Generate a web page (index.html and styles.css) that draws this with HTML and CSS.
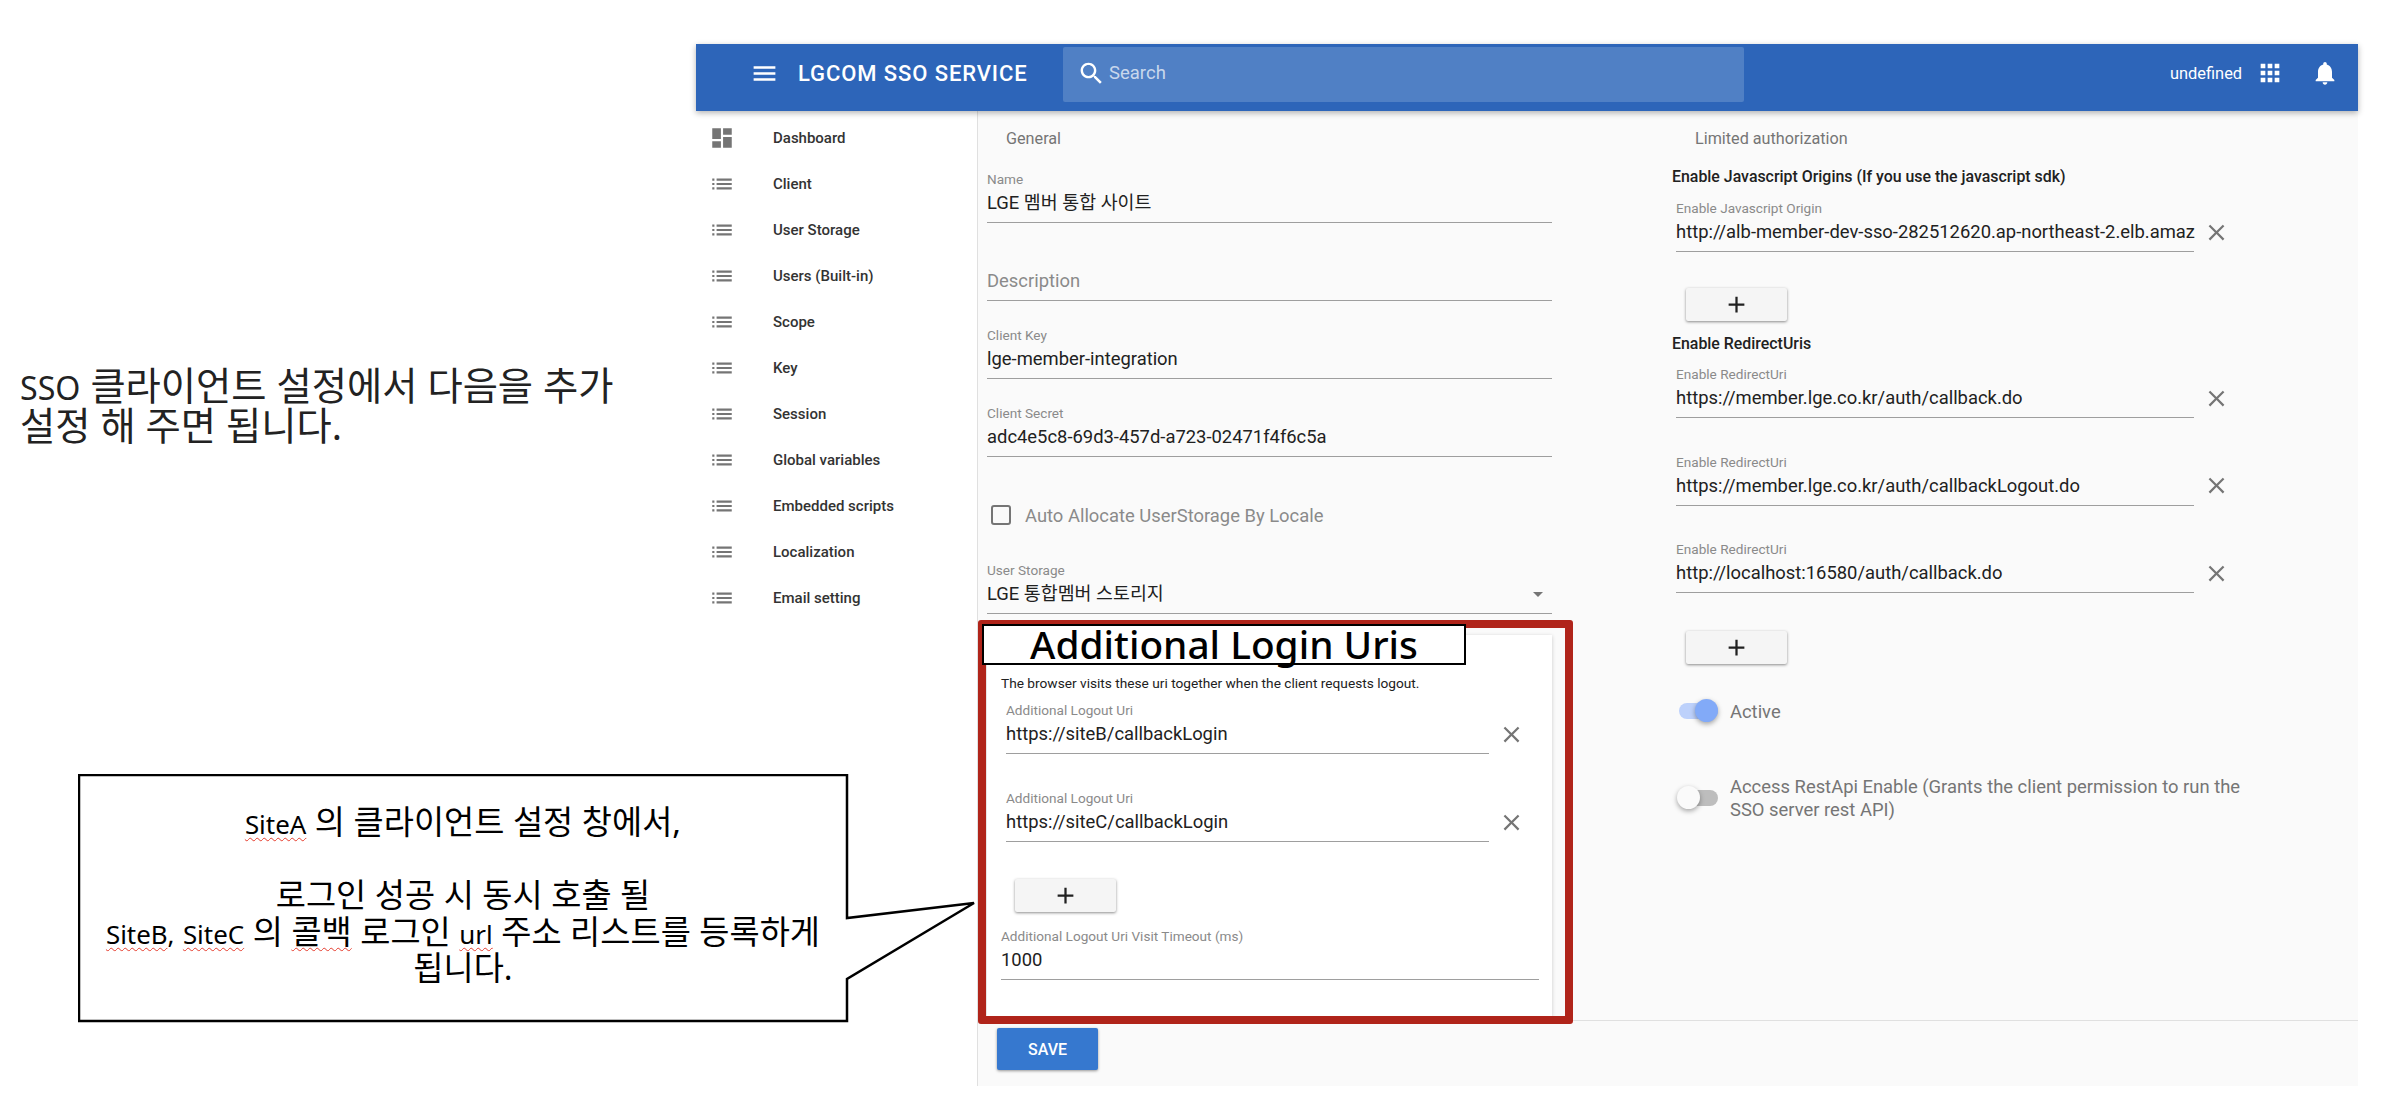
FILE: index.html
```html
<!DOCTYPE html>
<html lang="ko">
<head>
<meta charset="UTF-8">
<title>LGCOM SSO SERVICE</title>
<link rel="stylesheet" href="styles.css">
</head>
<body>
<svg class="defs" width="0" height="0">
	<symbol id="i-menu" viewBox="0 0 24 24"><path d="M3 18h18v-2H3v2zm0-5h18v-2H3v2zm0-7v2h18V6H3z"/></symbol>
	<symbol id="i-search" viewBox="0 0 24 24"><path d="M15.5 14h-.79l-.28-.27C15.41 12.59 16 11.11 16 9.5 16 5.91 13.09 3 9.500 3S3 5.910 3 9.500 5.910 16 9.500 16c1.610 0 3.090-.59 4.230-1.570l.27.28v.79l5 4.990L20.490 19l-4.990-5zm-6 0C7.010 14 5 11.990 5 9.500S7.010 5 9.500 5 14 7.010 14 9.500 11.990 14 9.500 14z"/></symbol>
	<symbol id="i-dash" viewBox="0 0 24 24"><path d="M3 13h8V3H3v10zm0 8h8v-6H3v6zm10 0h8V11h-8v10zm0-18v6h8V3h-8z"/></symbol>
	<symbol id="i-list" viewBox="0 0 24 24"><path d="M3 13h2v-2H3v2zm0 4h2v-2H3v2zm0-8h2V7H3v2zm4 4h14v-2H7v2zm0 4h14v-2H7v2zM7 7v2h14V7H7z"/></symbol>
	<symbol id="i-apps" viewBox="0 0 24 24"><path d="M4 8h4V4H4v4zm6 12h4v-4h-4v4zm-6 0h4v-4H4v4zm0-6h4v-4H4v4zm6 0h4v-4h-4v4zm6-10v4h4V4h-4zm-6 4h4V4h-4v4zm6 6h4v-4h-4v4zm0 6h4v-4h-4v4z"/></symbol>
	<symbol id="i-bell" viewBox="0 0 24 24"><path d="M12 22c1.100 0 2-.9 2-2h-4c0 1.100.89 2 2 2zm6-6v-5c0-3.070-1.640-5.640-4.500-6.320V4c0-.83-.67-1.500-1.500-1.500s-1.500.67-1.500 1.500v.68C7.630 5.360 6 7.920 6 11v5l-2 2v1h16v-1l-2-2z"/></symbol>
	<symbol id="i-clear" viewBox="0 0 24 24"><path d="M19 6.410L17.590 5 12 10.590 6.410 5 5 6.410 10.590 12 5 17.590 6.410 19 12 13.410 17.590 19 19 17.590 13.410 12z"/></symbol>
	<symbol id="i-add" viewBox="0 0 24 24"><path d="M19 13h-6v6h-2v-6H5v-2h6V5h2v6h6v2z"/></symbol>
</svg>

<div class="app">
	<header class="topbar">
		<svg class="ic-menu"><use href="#i-menu"/></svg>
		<div class="brand">LGCOM SSO SERVICE</div>
		<div class="search">
			<svg class="ic-search"><use href="#i-search"/></svg>
			<span>Search</span>
		</div>
		<div class="user">undefined</div>
		<svg class="ic-apps"><use href="#i-apps"/></svg>
		<svg class="ic-bell"><use href="#i-bell"/></svg>
	</header>
	<div class="body">
		<nav class="sidebar">
			<a class="nav-item"><svg><use href="#i-dash"/></svg>Dashboard</a>
			<a class="nav-item"><svg><use href="#i-list"/></svg>Client</a>
			<a class="nav-item"><svg><use href="#i-list"/></svg>User Storage</a>
			<a class="nav-item"><svg><use href="#i-list"/></svg>Users (Built-in)</a>
			<a class="nav-item"><svg><use href="#i-list"/></svg>Scope</a>
			<a class="nav-item"><svg><use href="#i-list"/></svg>Key</a>
			<a class="nav-item"><svg><use href="#i-list"/></svg>Session</a>
			<a class="nav-item"><svg><use href="#i-list"/></svg>Global variables</a>
			<a class="nav-item"><svg><use href="#i-list"/></svg>Embedded scripts</a>
			<a class="nav-item"><svg><use href="#i-list"/></svg>Localization</a>
			<a class="nav-item"><svg><use href="#i-list"/></svg>Email setting</a>
		</nav>
		<main class="main">
			<div class="content">
				<section class="col-left">
					<h2 class="group general">General</h2>
					<div class="field first">
						<label>Name</label>
						<div class="value">LGE 멤버 통합 사이트</div>
					</div>
					<div class="field gap">
						<label></label>
						<div class="value hint">Description</div>
					</div>
					<div class="field gap">
						<label>Client Key</label>
						<div class="value">lge-member-integration</div>
					</div>
					<div class="field gap">
						<label>Client Secret</label>
						<div class="value">adc4e5c8-69d3-457d-a723-02471f4f6c5a</div>
					</div>
					<div class="check-row">
						<span class="checkbox"></span>
						<span>Auto Allocate UserStorage By Locale</span>
					</div>
					<div class="field select">
						<label>User Storage</label>
						<div class="value">LGE 통합멤버 스토리지<span class="arrow"></span></div>
					</div>
					<div class="card">
						<p class="card-desc">The browser visits these uri together when the client requests logout.</p>
						<div class="uri-row first-uri">
							<div class="field">
								<label>Additional Logout Uri</label>
								<div class="value">https://siteB/callbackLogin</div>
							</div>
							<svg class="ic-clear"><use href="#i-clear"/></svg>
						</div>
						<div class="uri-row">
							<div class="field">
								<label>Additional Logout Uri</label>
								<div class="value">https://siteC/callbackLogin</div>
							</div>
							<svg class="ic-clear"><use href="#i-clear"/></svg>
						</div>
						<button class="add-btn card-add"><svg><use href="#i-add"/></svg></button>
						<div class="field timeout">
							<label>Additional Logout Uri Visit Timeout (ms)</label>
							<div class="value">1000</div>
						</div>
					</div>
				</section>
				<section class="col-right">
					<h2 class="group limited">Limited authorization</h2>
					<h3 class="sub js-origins">Enable Javascript Origins (If you use the javascript sdk)</h3>
					<div class="uri-row origin">
						<div class="field">
							<label>Enable Javascript Origin</label>
							<div class="value">http://alb-member-dev-sso-282512620.ap-northeast-2.elb.amaz</div>
						</div>
						<svg class="ic-clear"><use href="#i-clear"/></svg>
					</div>
					<button class="add-btn"><svg><use href="#i-add"/></svg></button>
					<h3 class="sub redirects">Enable RedirectUris</h3>
					<div class="uri-row redirect-first">
						<div class="field">
							<label>Enable RedirectUri</label>
							<div class="value">https://member.lge.co.kr/auth/callback.do</div>
						</div>
						<svg class="ic-clear"><use href="#i-clear"/></svg>
					</div>
					<div class="uri-row">
						<div class="field">
							<label>Enable RedirectUri</label>
							<div class="value">https://member.lge.co.kr/auth/callbackLogout.do</div>
						</div>
						<svg class="ic-clear"><use href="#i-clear"/></svg>
					</div>
					<div class="uri-row">
						<div class="field">
							<label>Enable RedirectUri</label>
							<div class="value">http://localhost:16580/auth/callback.do</div>
						</div>
						<svg class="ic-clear"><use href="#i-clear"/></svg>
					</div>
					<button class="add-btn add-last"><svg><use href="#i-add"/></svg></button>
					<div class="toggle-row active-row">
						<span class="toggle on"><i></i></span>
						<span>Active</span>
					</div>
					<div class="toggle-row rest-row">
						<span class="toggle"><i></i></span>
						<span>Access RestApi Enable (Grants the client permission to run the SSO server rest API)</span>
					</div>
				</section>
			</div>
			<footer class="footer">
				<button class="save">SAVE</button>
			</footer>
		</main>
	</div>
</div>

<p class="note"><span class="latin">SSO</span> 클라이언트 설정에서 다음을 추가<br>설정 해 주면 됩니다.</p>

<div class="red-box"></div>
<div class="title-box">Additional Login Uris</div>

<svg class="bubble" width="900" height="250" viewBox="0 0 900 250">
	<path d="M1 1H769V144L896 129L769 205V247H1Z" fill="#fff" stroke="#000" stroke-width="2.500"/>
</svg>
<div class="bubble-text">
	<span class="typo latin">SiteA</span> 의 클라이언트 설정 창에서,<br>
	<br>
	로그인 성공 시 동시 호출 될<br>
	<span class="typo latin">SiteB</span><span class="latin">,</span> <span class="typo latin">SiteC</span> 의 <span class="typo">콜백</span> 로그인 <span class="typo latin">url</span> 주소 리스트를 등록하게<br>
	됩니다.
</div>
</body>
</html>
```

FILE: styles.css
```css
* {
	box-sizing: border-box;
}
html, body {
	margin: 0;
	height: 1118px;
	overflow: hidden;
}
body {
	position: relative;
	background: #fff;
	padding: 44px 40px 32px 696px;
	font-family: Roboto, "Noto Sans CJK KR", sans-serif;
	color: #212121;
}
.defs {
	position: absolute;
}

/* app frame */
.app {
	display: flex;
	flex-direction: column;
	height: 1042px;
}
.topbar {
	position: relative;
	z-index: 2;
	display: flex;
	align-items: center;
	flex: none;
	height: 67px;
	padding: 0 0 9px 54px;
	background: #2d65b9;
	color: #fff;
	box-shadow: 0 2px 6px rgba(0,0,0,.3);
}
.topbar svg {
	flex: none;
	fill: #fff;
}
.ic-menu {
	width: 29px;
	height: 29px;
}
.brand {
	width: 250px;
	margin-left: 19px;
	font-size: 22px;
	font-weight: 500;
	letter-spacing: .9px;
	white-space: nowrap;
}
.search {
	display: flex;
	align-items: center;
	width: 681px;
	height: 55px;
	margin-left: 15px;
	margin-top: 3px;
	padding: 0 0 3px 14px;
	background: #5080c5;
	border-radius: 2px;
	color: rgba(255,255,255,.7);
	font-size: 18.500px;
}
.topbar .ic-search {
	width: 29px;
	height: 29px;
	margin-right: 3px;
}
.user {
	margin-left: 426px;
	width: 86px;
	font-size: 16.400px;
}
.ic-apps {
	width: 28px;
	height: 28px;
}
.ic-bell {
	width: 28px;
	height: 28px;
	margin-left: 27px;
}
.body {
	display: flex;
	flex: 1;
	min-height: 0;
}

/* sidebar */
.sidebar {
	flex: none;
	width: 282px;
	padding-top: 4px;
	background: #fff;
	border-right: 1px solid #e0e0e0;
}
.nav-item {
	display: flex;
	align-items: center;
	height: 46px;
	padding-left: 13px;
	font-size: 15px;
	font-weight: 500;
	color: #333;
}
.nav-item svg {
	width: 26px;
	height: 26px;
	margin-right: 38px;
	fill: #757575;
}

/* main */
.main {
	display: flex;
	flex-direction: column;
	flex: 1;
	background: #fafafa;
}
.content {
	display: grid;
	grid-template-columns: 565px 1fr;
	column-gap: 120px;
	flex: none;
	height: 909px;
	padding-left: 9px;
	overflow: hidden;
}
.group {
	margin: 18px 0 0;
	font-size: 16.200px;
	line-height: 20px;
	font-weight: 400;
	color: #757575;
}
.general {
	padding-left: 19px;
}
.limited {
	padding-left: 23px;
}
.sub {
	margin: 0;
	font-size: 15.900px;
	line-height: 20px;
	font-weight: 500;
	color: #212121;
}
.js-origins {
	margin-top: 18px;
}
.redirects {
	margin: 13px 0 0;
}

/* fields */
.field {
	height: 51px;
	border-bottom: 1px solid #9e9e9e;
}
.field label {
	display: block;
	height: 14px;
	font-size: 13.600px;
	line-height: 14px;
	color: #8a8a8a;
}
.value {
	position: relative;
	margin-top: 5px;
	font-size: 18.400px;
	line-height: 24px;
	white-space: nowrap;
}
.value.hint {
	color: #8a8a8a;
}
.field.first {
	margin-top: 23px;
}
.field.gap {
	margin-top: 27px;
}
.check-row {
	display: flex;
	align-items: center;
	height: 24px;
	margin: 46px 0 0 4px;
	font-size: 18.400px;
	color: #8a8a8a;
}
.checkbox {
	width: 20px;
	height: 20px;
	margin-right: 14px;
	border: 2px solid #757575;
	border-radius: 3px;
}
.field.select {
	margin-top: 36px;
}
.arrow {
	position: absolute;
	right: 9px;
	top: 10px;
	border-left: 5px solid transparent;
	border-right: 5px solid transparent;
	border-top: 5px solid #757575;
}

/* uri rows */
.uri-row {
	display: flex;
	margin-top: 36.500px;
	margin-left: 4px;
}
.uri-row .field {
	flex: none;
	width: 518px;
}
.ic-clear {
	flex: none;
	width: 27px;
	height: 27px;
	margin: 17.500px 0 0 9px;
	fill: #757575;
}
.uri-row.origin {
	margin-top: 14px;
}
.uri-row.redirect-first {
	margin-top: 13px;
}
.add-btn {
	display: flex;
	align-items: center;
	justify-content: center;
	width: 101px;
	height: 33px;
	margin: 36px 0 0 14px;
	padding: 0;
	border: 0;
	border-radius: 2px;
	background: #f5f5f5;
	box-shadow: 0 1px 3px rgba(0,0,0,.45);
}
.add-btn.add-last {
	margin-top: 37.500px;
}
.add-btn svg {
	width: 27px;
	height: 27px;
	fill: #212121;
}
.toggle-row {
	display: flex;
	align-items: center;
	margin-left: 5px;
	font-size: 18.400px;
	line-height: 23px;
	color: #757575;
}
.active-row {
	margin-top: 35.500px;
	height: 24px;
}
.rest-row {
	margin-top: 52px;
	width: 575px;
}
.toggle {
	position: relative;
	flex: none;
	width: 39px;
	height: 16px;
	margin: 0 12px 0 2px;
	border-radius: 8px;
	background: #bdbdbd;
}
.toggle i {
	position: absolute;
	top: -4px;
	left: -2px;
	width: 23px;
	height: 23px;
	border-radius: 50%;
	background: #fafafa;
	box-shadow: 0 2px 5px rgba(0,0,0,.35);
}
.toggle.on {
	background: #bdd1fb;
}
.toggle.on i {
	left: 16px;
	background: #82aaf8;
}

/* card */
.card {
	width: 565px;
	height: 381px;
	margin-top: 21px;
	padding: 41px 0 0 14px;
	background: #fff;
	box-shadow: 0 1px 4px rgba(0,0,0,.2);
}
.card-desc {
	margin: 0;
	font-size: 13.700px;
	line-height: 14px;
	color: #212121;
}
.card .uri-row {
	margin-left: 5px;
	margin-top: 37px;
}
.card .uri-row .field {
	width: 483px;
}
.card .first-uri {
	margin-top: 13px;
}
.card-add {
	margin: 37px 0 0 14px;
}
.field.timeout {
	width: 538px;
	margin-top: 17px;
}

/* footer */
.footer {
	flex: 1;
	padding: 7px 19px;
	border-top: 1px solid #e0e0e0;
}
.save {
	width: 101px;
	height: 42px;
	border: 0;
	border-radius: 2px;
	background: #3678cf;
	color: #fff;
	font: 500 16px Roboto, sans-serif;
	box-shadow: 0 1px 3px rgba(0,0,0,.4);
}

/* slide annotations over the screenshot */
.note {
	position: absolute;
	left: 20px;
	top: 365px;
	margin: 0;
	font-family: "Noto Sans", "Noto Sans CJK KR", sans-serif;
	font-size: 38.300px;
	line-height: 40px;
	color: #222;
}
.note .latin {
	font-size: 84%;
	line-height: 1;
}
.red-box {
	position: absolute;
	left: 978px;
	top: 620px;
	width: 595px;
	height: 404px;
	border: 8px solid #b0241a;
	border-radius: 3px;
}
.title-box {
	position: absolute;
	left: 982px;
	top: 624px;
	width: 484px;
	height: 41px;
	border: 2px solid #000;
	background: #fff;
	color: #000;
	font-family: "Noto Sans", "Noto Sans CJK KR", sans-serif;
	font-size: 38.800px;
	font-weight: 500;
	line-height: 37px;
	text-align: center;
}
.bubble {
	position: absolute;
	left: 78px;
	top: 774px;
}
.bubble-text {
	position: absolute;
	left: 80px;
	top: 804px;
	width: 766px;
	font-family: "Noto Sans", "Noto Sans CJK KR", sans-serif;
	font-size: 32.800px;
	line-height: 36.500px;
	text-align: center;
	color: #000;
}
.bubble-text .latin {
	font-size: 79%;
	line-height: 1;
}
.typo {
	text-decoration: underline wavy #e53c2e 1px;
	text-underline-offset: 3px;
}
```
